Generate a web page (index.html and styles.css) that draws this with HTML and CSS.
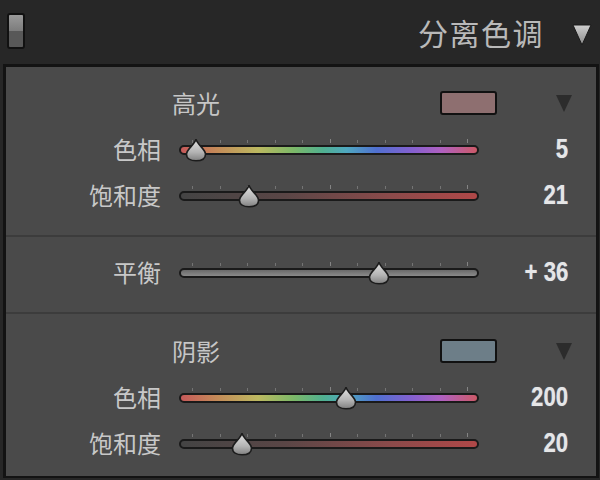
FILE: index.html
```html
<!DOCTYPE html>
<html lang="zh">
<head>
<meta charset="utf-8">
<link rel="stylesheet" href="styles.css">
</head>
<body>
<svg width="0" height="0" class="defs">
  <defs>
    <linearGradient id="thumbGrad" x1="0" y1="0" x2="0" y2="1">
      <stop offset="0" stop-color="#e2e2e2"/>
      <stop offset="0.6" stop-color="#b4b4b4"/>
      <stop offset="1" stop-color="#808080"/>
    </linearGradient>
    <linearGradient id="triGrad" x1="0" y1="0" x2="0" y2="1">
      <stop offset="0" stop-color="#d0d0d0"/>
      <stop offset="1" stop-color="#8a8a8a"/>
    </linearGradient>
    <symbol id="thumb" viewBox="0 0 24 24">
      <path d="M12 1.2 C13 6.5 21.5 11 21.5 16.2 C21.5 20.6 17.5 22.8 12 22.8 C6.5 22.8 2.5 20.6 2.5 16.2 C2.5 11 11 6.5 12 1.2 Z" fill="url(#thumbGrad)" stroke="#1c1c1c" stroke-width="1.6"/>
    </symbol>
  </defs>
</svg>

<header class="top">
  <div class="toggle"><span class="t-up"></span><span class="t-down"></span></div>
  <div class="spacer"></div>
  <h1 class="title">分离色调</h1>
  <svg class="head-tri" width="20" height="22" viewBox="0 0 20 22"><path d="M1 1 H19 L10 21 Z" fill="url(#triGrad)" stroke="#1a1a1a" stroke-width="1"/></svg>
</header>

<main class="panel">
  <section class="sect sect-first">
    <div class="heading">
      <span class="hname">高光</span>
      <span class="swatch swatch-hi"></span>
      <svg class="sub-tri" width="18" height="20" viewBox="0 0 18 20"><path d="M1 2 H17 L9 19 Z" fill="#2c2c2c"/></svg>
    </div>
    <div class="row">
      <span class="label">色相</span>
      <div class="slider">
        <div class="ticks"><i></i><i></i><i></i><i></i><i></i><i class="tall"></i><i></i><i></i><i></i><i></i><i class="tall"></i></div>
        <div class="track hue"></div>
        <svg class="thumb" style="left:5px" width="24" height="24"><use href="#thumb"/></svg>
      </div>
      <span class="value"><b>5</b></span>
    </div>
    <div class="row">
      <span class="label">饱和度</span>
      <div class="slider">
        <div class="ticks"><i></i><i></i><i></i><i></i><i></i><i class="tall"></i><i></i><i></i><i></i><i></i><i class="tall"></i></div>
        <div class="track sat"></div>
        <svg class="thumb" style="left:58px" width="24" height="24"><use href="#thumb"/></svg>
      </div>
      <span class="value"><b>21</b></span>
    </div>
  </section>

  <section class="sect sect-mid">
    <div class="row">
      <span class="label">平衡</span>
      <div class="slider">
        <div class="ticks"><i></i><i></i><i></i><i></i><i></i><i class="tall"></i><i></i><i></i><i></i><i></i><i class="tall"></i></div>
        <div class="track bal"></div>
        <svg class="thumb" style="left:188px" width="24" height="24"><use href="#thumb"/></svg>
      </div>
      <span class="value"><b>+ 36</b></span>
    </div>
  </section>

  <section class="sect sect-last">
    <div class="heading">
      <span class="hname">阴影</span>
      <span class="swatch swatch-sh"></span>
      <svg class="sub-tri" width="18" height="20" viewBox="0 0 18 20"><path d="M1 2 H17 L9 19 Z" fill="#2c2c2c"/></svg>
    </div>
    <div class="row">
      <span class="label">色相</span>
      <div class="slider">
        <div class="ticks"><i></i><i></i><i></i><i></i><i></i><i class="tall"></i><i></i><i></i><i></i><i></i><i class="tall"></i></div>
        <div class="track hue"></div>
        <svg class="thumb" style="left:155px" width="24" height="24"><use href="#thumb"/></svg>
      </div>
      <span class="value"><b>200</b></span>
    </div>
    <div class="row">
      <span class="label">饱和度</span>
      <div class="slider">
        <div class="ticks"><i></i><i></i><i></i><i></i><i></i><i class="tall"></i><i></i><i></i><i></i><i></i><i class="tall"></i></div>
        <div class="track sat"></div>
        <svg class="thumb" style="left:51px" width="24" height="24"><use href="#thumb"/></svg>
      </div>
      <span class="value"><b>20</b></span>
    </div>
  </section>
</main>
</body>
</html>
```

FILE: styles.css
```css
* { box-sizing: border-box; margin: 0; padding: 0; }

html, body {
  width: 600px;
  height: 480px;
  overflow: hidden;
  background: #272727;
  font-family: "Noto Sans CJK SC", "Noto Sans", sans-serif;
}

.defs { position: absolute; }

.top {
  height: 64px;
  display: flex;
  align-items: center;
  padding: 0 8px 0 7px;
}

.toggle {
  width: 18px;
  height: 36px;
  border: 2px solid #111;
  border-radius: 3px;
  display: flex;
  flex-direction: column;
  overflow: hidden;
  margin-top: -3px;
}
.t-up { flex: 1; background: linear-gradient(#9a9a9a, #7c7c7c); }
.t-down { flex: 1; background: #585858; }

.spacer { flex: 1; }

.title {
  font-size: 30px;
  font-weight: 400;
  color: #b9b9b9;
  letter-spacing: 1.5px;
  margin-right: 28px;
  line-height: 1;
}

.head-tri { margin-top: 6px; }

.panel {
  margin: 0 1px 0 3px;
  height: 414px;
  background: #4a4a4a;
  border: 3px solid #131313;
  border-bottom-width: 2px;
}

.sect { display: flex; flex-direction: column; }
.sect-first { padding-top: 13px; height: 168px; }
.sect-mid { padding-top: 12px; height: 77px; border-top: 2px solid #3c3c3c; }
.sect-last { padding-top: 14px; border-top: 2px solid #3c3c3c; }

.heading {
  height: 46px;
  display: flex;
  align-items: center;
  padding-left: 166px;
  padding-right: 23px;
}
.hname {
  flex: 1;
  font-size: 24px;
  color: #c6c6c6;
  line-height: 1;
}
.swatch {
  width: 57px;
  height: 24px;
  border: 2px solid #111;
  border-radius: 3px;
  margin-right: 58px;
}
.swatch-hi { background: #8e6f70; }
.swatch-sh { background: #6d7e88; }

.row {
  height: 46px;
  display: grid;
  grid-template-columns: 155px 300px 71px;
  column-gap: 18px;
  align-items: center;
}
.label {
  text-align: right;
  font-size: 24px;
  color: #c8c8c8;
  line-height: 1;
}
.value {
  text-align: right;
  font-family: "Liberation Sans", "DejaVu Sans", sans-serif;
  font-size: 27px;
  color: #e6e6e6;
  line-height: 1;
  text-shadow: 0 0 1px #8aa0c0;
}
.value b {
  display: inline-block;
  font-weight: 700;
  transform: scaleX(0.82);
  transform-origin: right center;
}

.slider {
  position: relative;
  height: 23px;
  margin-top: 2px;
}
.ticks {
  height: 4px;
  display: flex;
  justify-content: space-between;
  align-items: flex-end;
  padding: 0 11px 0 13px;
  margin-bottom: 2px;
}
.ticks i {
  width: 1px;
  height: 3px;
  background: #747474;
}
.ticks i.tall { height: 4px; background: #848484; }

.track {
  height: 10px;
  border: 2px solid #1a1a1a;
  border-radius: 5px;
}
.hue {
  background: linear-gradient(90deg, #c65a5a 0%, #c48a58 12%, #bcb860 26%, #7cb868 38%, #50b090 48%, #4fa8c0 56%, #5070d0 66%, #8460d0 78%, #b060c0 88%, #cc5a68 100%);
}
.sat {
  background: linear-gradient(90deg, #444 0%, #5a4646 35%, #8a4a4a 70%, #b04848 100%);
}
.bal {
  background: linear-gradient(#6a6a6a, #8a8a8a);
}

.thumb {
  position: absolute;
  top: -1px;
}
```
